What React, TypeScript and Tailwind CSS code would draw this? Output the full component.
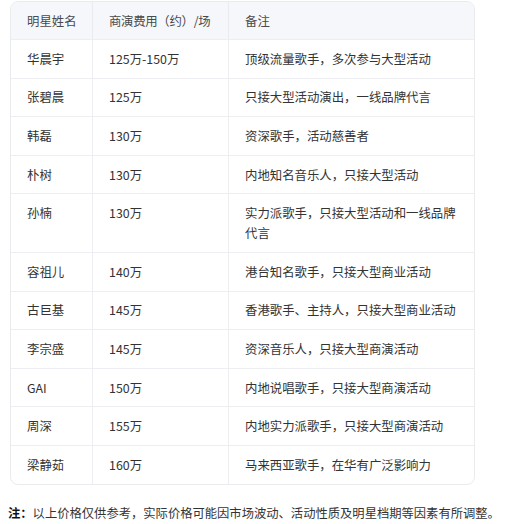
import React from "react";

const rows: [string, string, string][] = [
  ["华晨宇", "125万-150万", "顶级流量歌手，多次参与大型活动"],
  ["张碧晨", "125万", "只接大型活动演出，一线品牌代言"],
  ["韩磊", "130万", "资深歌手，活动慈善者"],
  ["朴树", "130万", "内地知名音乐人，只接大型活动"],
  ["孙楠", "130万", "实力派歌手，只接大型活动和一线品牌代言"],
  ["容祖儿", "140万", "港台知名歌手，只接大型商业活动"],
  ["古巨基", "145万", "香港歌手、主持人，只接大型商业活动"],
  ["李宗盛", "145万", "资深音乐人，只接大型商演活动"],
  ["GAI", "150万", "内地说唱歌手，只接大型商演活动"],
  ["周深", "155万", "内地实力派歌手，只接大型商演活动"],
  ["梁静茹", "160万", "马来西亚歌手，在华有广泛影响力"],
];

export default function App() {
  return (
    <div
      className="w-[506px] h-[524px] bg-white pt-[1px] text-[12.4px] leading-[20px] text-[#333] overflow-hidden"
      style={{ fontFamily: '"Noto Sans CJK SC", "Noto Sans", sans-serif' }}
    >
      <div className="ml-[10px] w-[465px] border border-[#e9ebef] rounded-[8px] overflow-hidden">
        <div className="grid grid-cols-[81px_136px_1fr] bg-[#f5f7fa] text-[#4a4a4a] whitespace-nowrap">
          <div className="px-4 py-[8.5px]">明星姓名</div>
          <div className="px-4 py-[8.5px] border-l border-[#e9ebef] tracking-[-0.3px]">商演费用（约）/场</div>
          <div className="px-4 py-[8.5px] border-l border-[#e9ebef]">备注</div>
        </div>
        {rows.map((r) => (
          <div key={r[0]} className="grid grid-cols-[81px_136px_1fr] border-t border-[#eceef1]">
            <div className="px-4 py-[8.8px]">{r[0]}</div>
            <div className="px-4 py-[8.8px] border-l border-[#eceef1]">{r[1]}</div>
            <div className="px-4 py-[8.8px] border-l border-[#eceef1]">{r[2]}</div>
          </div>
        ))}
      </div>
      <div className="mt-[20px] ml-[8px] text-[12.3px] leading-[16px] text-[#333] whitespace-nowrap">
        <span className="font-bold text-[#111]">注：</span>
        以上价格仅供参考，实际价格可能因市场波动、活动性质及明星档期等因素有所调整。
      </div>
    </div>
  );
}
